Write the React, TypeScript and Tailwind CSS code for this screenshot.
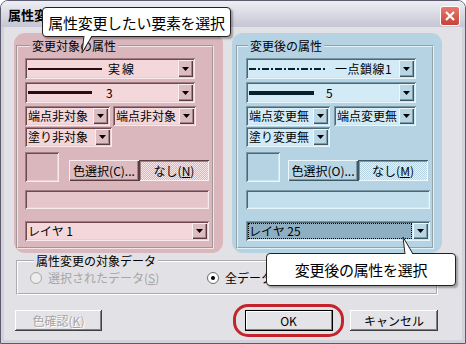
import type { ReactNode } from "react";

type Theme = {
  panel: string;
  field: string;
  well: string;
  sunk: string;
  raised: string;
  pressed: string;
  group: string;
  ink: string;
};

const pink: Theme = {
  panel: "bg-[#d9b7bd]",
  field: "bg-[#f3d7db]",
  well: "bg-[#e6c6cb]",
  sunk: "shadow-[inset_1px_1px_0_#9e7b80,inset_-1px_-1px_0_#f8eaec,inset_2px_2px_0_#6c4a4f,inset_-2px_-2px_0_#e8cfd3]",
  raised: "bg-[#dcbcc1] shadow-[inset_1px_1px_0_#faeef0,inset_-1px_-1px_0_#5a3c40,inset_-2px_-2px_0_#a3838a]",
  pressed:
    "bg-[image:repeating-conic-gradient(#f6e4e7_0_25%,#d9b7bd_0_50%)] bg-[length:2px_2px] shadow-[inset_1px_1px_0_#5a3c40,inset_-1px_-1px_0_#faeef0,inset_2px_2px_0_#a3838a]",
  group: "border-[#f4e4e6]",
  ink: "#2a0c10",
};

const blue: Theme = {
  panel: "bg-[#b5d3e3]",
  field: "bg-[#d2ebf7]",
  well: "bg-[#c3dfed]",
  sunk: "shadow-[inset_1px_1px_0_#7896a4,inset_-1px_-1px_0_#e8f6fc,inset_2px_2px_0_#4c6874,inset_-2px_-2px_0_#cfe6f0]",
  raised: "bg-[#b9d6e5] shadow-[inset_1px_1px_0_#eef8fc,inset_-1px_-1px_0_#3e5864,inset_-2px_-2px_0_#7e9aa8]",
  pressed:
    "bg-[image:repeating-conic-gradient(#e6f4fa_0_25%,#b5d3e3_0_50%)] bg-[length:2px_2px] shadow-[inset_1px_1px_0_#3e5864,inset_-1px_-1px_0_#eef8fc,inset_2px_2px_0_#7e9aa8]",
  group: "border-[#e2f2fa]",
  ink: "#08202c",
};

function Drop({ t }: { t: Theme }) {
  return (
    <div className={`w-[15px] shrink-0 flex items-center justify-center ${t.raised}`}>
      <svg width="7" height="4" viewBox="0 0 7 4">
        <path d="M0 0H7L3.5 4Z" fill="#000" />
      </svg>
    </div>
  );
}

function Combo({ t, w, h = "h-[20px]", children, selected }: { t: Theme; w: string; h?: string; children: ReactNode; selected?: boolean }) {
  return (
    <div className={`flex p-[2px] ${t.field} ${t.sunk} ${w} ${h}`}>
      <div
        className={`flex-1 min-w-0 flex items-center whitespace-nowrap overflow-hidden text-[12px] leading-none ${
          selected ? "bg-[#8eafc2] border border-dotted border-black mr-[1px]" : "pl-[1px]"
        }`}
      >
        {children}
      </div>
      <Drop t={t} />
    </div>
  );
}

function Btn({ t, w, children, pressed }: { t: Theme; w: string; children: ReactNode; pressed?: boolean }) {
  return (
    <div className={`h-[21px] flex items-center justify-center text-[12px] leading-none ${pressed ? t.pressed : t.raised} ${w}`}>
      {children}
    </div>
  );
}

function Group({ t, title, box, legend, pad, children }: { t: Theme; title: string; box: string; legend: string; pad: string; children: ReactNode }) {
  return (
    <fieldset className={`h-[210px] border-2 [border-style:groove] ${t.group} ${box} ${pad}`}>
      <legend className={`px-[2px] text-[12px] leading-[14px] ${legend}`}>{title}</legend>
      {children}
    </fieldset>
  );
}

function Side({ t, before }: { t: Theme; before: boolean }) {
  const s = before
    ? { line: "実線", width: "3", ends: "端点非対象", fill: "塗り非対象", pick: "C", none: "N", layer: "レイヤ 1" }
    : { line: "一点鎖線1", width: "5", ends: "端点変更無", fill: "塗り変更無", pick: "O", none: "M", layer: "レイヤ 25" };
  return (
    <div className={`h-[220px] rounded-[11px] pt-[6px] ${t.panel} ${before ? "w-[209px]" : "w-[210px]"}`}>
      <Group
        t={t}
        title={before ? "変更対象の属性" : "変更後の属性"}
        box={before ? "ml-[2px] w-[198px]" : "ml-[4px] w-[198px]"}
        legend={before ? "ml-[5px]" : "ml-[2px]"}
        pad={before ? "pl-[7px]" : "pl-[8px]"}
      >
        <div className="flex flex-col">
          <Combo t={t} w="w-[170px] mt-[5px]" h="h-[21px]">
            {before ? (
              <>
                <svg width="74" height="2" className="shrink-0">
                  <rect width="74" height="2" fill={t.ink} />
                </svg>
                <span className="ml-[6px] tracking-[2px]">{s.line}</span>
              </>
            ) : (
              <>
                <svg width="76" height="2" className="shrink-0">
                  <line x1="0" y1="1" x2="76" y2="1" stroke={t.ink} strokeWidth="2" strokeDasharray="7 2 2 2" />
                </svg>
                <span className="ml-[10px] tracking-[0.5px]">{s.line}</span>
              </>
            )}
          </Combo>
          <Combo t={t} w="w-[170px] mt-[3px]" h="h-[21px]">
            <svg width={before ? 64 : 65} height={before ? 3 : 4} className="shrink-0">
              <rect width="65" height="4" fill={t.ink} />
            </svg>
            <span className={before ? "ml-[14px]" : "ml-[12px]"}>{s.width}</span>
          </Combo>
          <div className={`flex mt-[3px] ${before ? "gap-[3px]" : "gap-[4px]"}`}>
            <Combo t={t} w={before ? "w-[85px]" : "w-[84px]"}>
              {s.ends}
            </Combo>
            <Combo t={t} w={before ? "w-[83px]" : "w-[82px]"}>
              {s.ends}
            </Combo>
          </div>
          <Combo t={t} w={before ? "w-[87px] mt-[1px]" : "w-[84px] mt-[1px]"}>
            {s.fill}
          </Combo>
          <div className="flex items-start mt-[5px]">
            <div className={`w-[34px] h-[30px] ${t.panel} ${t.sunk}`} />
            <div className={`flex mt-[8px] ${before ? "ml-[10px]" : "ml-[8px]"}`}>
              <Btn t={t} w="w-[70px]">
                色選択({s.pick})...
              </Btn>
              <Btn t={t} w="w-[70px]" pressed>
                なし(<span className="underline">{s.none}</span>)
              </Btn>
            </div>
          </div>
          <div className={`w-[184px] h-[19px] mt-[8px] ${t.well} ${t.sunk}`} />
          <Combo t={t} w="w-[184px] mt-[12px]" selected={!before}>
            {s.layer}
          </Combo>
        </div>
      </Group>
    </div>
  );
}

function Radio({ checked, disabled }: { checked?: boolean; disabled?: boolean }) {
  return (
    <svg width="12" height="12" viewBox="0 0 12 12" className="shrink-0">
      <circle cx="6" cy="6" r="5.5" fill={disabled ? "#ececec" : "#fff"} stroke={disabled ? "#a8a8a8" : "#6a6a6a"} />
      {checked && <circle cx="6" cy="6" r="2" fill="#000" />}
    </svg>
  );
}

const plain = "bg-[#e4e3e7] shadow-[inset_-1px_-1px_0_#404040,inset_1px_1px_0_#fff,inset_-2px_-2px_0_#808080]";

export default function App() {
  return (
    <div className="relative w-[466px] h-[344px] bg-white font-['Noto_Sans_CJK_JP',sans-serif] text-black">
      <div className="w-full h-full flex flex-col border border-[#5b5b6d] rounded-t-[8px] overflow-hidden">
        <div className="h-[26px] shrink-0 flex items-center justify-between pl-[7px] pr-[5px] bg-linear-to-b from-[#eeeef4] to-[#c6c6d4]">
          <span className="text-[13px] font-bold leading-none">属性変更</span>
          <div className="self-end mb-[1px] w-[20px] h-[20px] rounded-[3px] border border-white bg-linear-to-b from-[#e8796e] to-[#c4433a] flex items-center justify-center">
            <svg width="10" height="10" viewBox="0 0 10 10">
              <path d="M1 1L9 9M9 1L1 9" stroke="#fff" strokeWidth="2.2" />
            </svg>
          </div>
        </div>
        <div className="flex-1 flex flex-col border-x-[3px] border-b-[3px] border-[#d2d2da] bg-[#e2e1e5] pl-[10px] pt-[6px]">
          <div className="flex gap-[9px]">
            <Side t={pink} before />
            <Side t={blue} before={false} />
          </div>
          <fieldset className="ml-[2px] mt-[1px] w-[422px] h-[41px] border-2 [border-style:groove] border-white pl-[12px]">
            <legend className="ml-[4px] px-[2px] text-[12px] leading-[14px]">属性変更の対象データ</legend>
            <div className="flex items-center mt-[4px] text-[12px] leading-none">
              <div className="w-[177px] flex items-center gap-[6px] text-[#a6a6a6]">
                <Radio disabled />
                <span>
                  選択されたデータ(<span className="underline">S</span>)
                </span>
              </div>
              <div className="flex items-center gap-[6px]">
                <Radio checked />
                <span>
                  全データ(<span className="underline">A</span>)
                </span>
              </div>
            </div>
          </fieldset>
          <div className="flex items-center mt-[9px] text-[12px] leading-none">
            <div className={`ml-[1px] w-[87px] h-[21px] flex items-center justify-center text-[#a6a6a6] [text-shadow:1px_1px_0_#fff] ${plain}`}>
              色確認(<span className="underline">K</span>)
            </div>
            <div className="ml-[131px] w-[111px] h-[33px] border-[3px] border-[#c4232b] rounded-[15px] flex items-center justify-center">
              <div className="w-[88px] h-[21px] flex items-center justify-center bg-[#e4e3e7] shadow-[inset_0_0_0_1px_#000,inset_-2px_-2px_0_#808080,inset_2px_2px_0_#fff]">
                OK
              </div>
            </div>
            <div className={`ml-[6px] w-[88px] h-[21px] flex items-center justify-center ${plain}`}>キャンセル</div>
          </div>
        </div>
      </div>

      <div className="absolute left-[42px] top-[7px] w-[189px] h-[30px] bg-white border border-[#222] rounded-[4px] shadow-[2px_2px_2px_rgba(0,0,0,0.3)] flex items-center justify-center text-[15px] leading-none tracking-[-0.3px]">
        属性変更したい要素を選択
      </div>
      <svg className="absolute left-[78px] top-[35px]" width="16" height="19" viewBox="0 0 16 19">
        <polygon points="6,0 14,0 4,18" fill="#fff" />
        <path d="M6 1L4 18L14 1" fill="none" stroke="#222" />
      </svg>

      <div className="absolute left-[266px] top-[253px] w-[190px] h-[33px] bg-white border border-[#222] rounded-[4px] shadow-[2px_2px_2px_rgba(0,0,0,0.3)] flex items-center justify-center text-[15px] leading-none tracking-[-0.3px]">
        変更後の属性を選択
      </div>
      <svg className="absolute left-[398px] top-[236px]" width="18" height="20" viewBox="0 0 18 20">
        <polygon points="5,1 7,19 15,19" fill="#fff" />
        <path d="M7 18L5 1L15 18" fill="none" stroke="#222" />
      </svg>
    </div>
  );
}
